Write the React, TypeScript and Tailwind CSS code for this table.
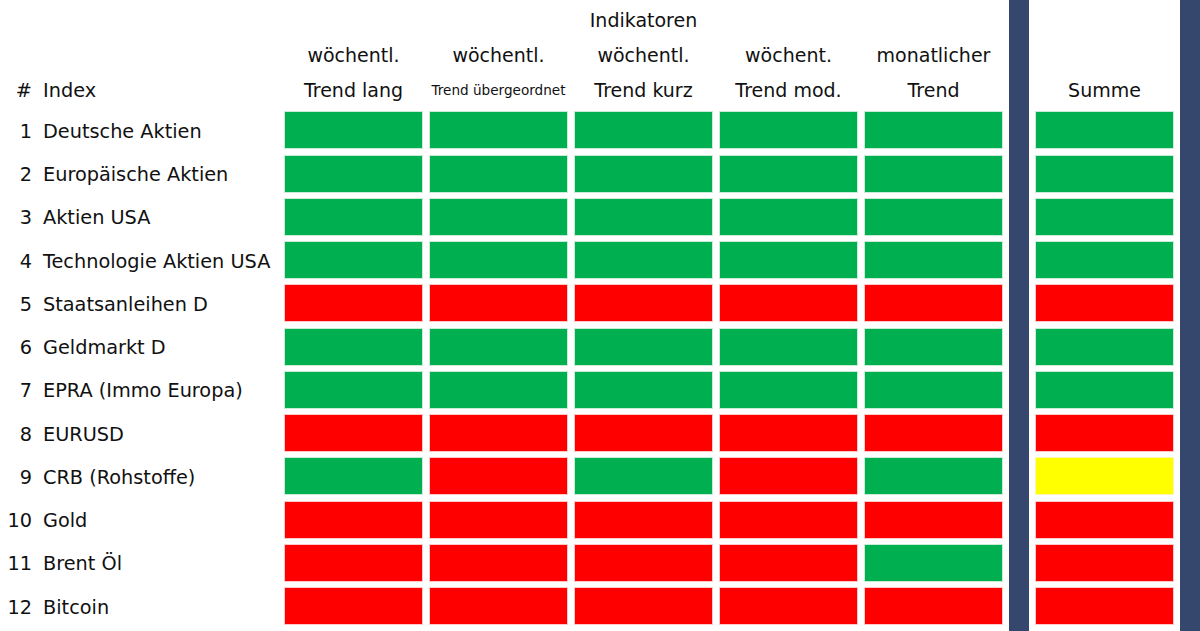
const G = 'g'
const R = 'r'
const Y = 'y'

type Row = { n: number; name: string; cells: string[]; sum: string }

const rows: Row[] = [
  { n: 1, name: 'Deutsche Aktien', cells: [G, G, G, G, G], sum: G },
  { n: 2, name: 'Europäische Aktien', cells: [G, G, G, G, G], sum: G },
  { n: 3, name: 'Aktien USA', cells: [G, G, G, G, G], sum: G },
  { n: 4, name: 'Technologie Aktien USA', cells: [G, G, G, G, G], sum: G },
  { n: 5, name: 'Staatsanleihen D', cells: [R, R, R, R, R], sum: R },
  { n: 6, name: 'Geldmarkt D', cells: [G, G, G, G, G], sum: G },
  { n: 7, name: 'EPRA (Immo Europa)', cells: [G, G, G, G, G], sum: G },
  { n: 8, name: 'EURUSD', cells: [R, R, R, R, R], sum: R },
  { n: 9, name: 'CRB (Rohstoffe)', cells: [G, R, G, R, G], sum: Y },
  { n: 10, name: 'Gold', cells: [R, R, R, R, R], sum: R },
  { n: 11, name: 'Brent Öl', cells: [R, R, R, R, G], sum: R },
  { n: 12, name: 'Bitcoin', cells: [R, R, R, R, R], sum: R },
]

const colorClass: Record<string, string> = {
  g: 'bg-[#00b050] border-[#c8ecd6]',
  r: 'bg-[#ff0000] border-[#ffc9c9]',
  y: 'bg-[#ffff00] border-[#fff3b0]',
}

function Cell({ c }: { c: string }) {
  return <div className={`border ${colorClass[c]}`} />
}

function HeadCell({ lines, small }: { lines: string[]; small?: boolean }) {
  return (
    <div className="-mb-[2px] flex flex-col items-center justify-end text-[19px] leading-[35px] text-[#111]">
      {lines.map((l, i) => (
        <div
          key={i}
          className={small && i === lines.length - 1 ? 'whitespace-nowrap text-[13.6px]' : 'whitespace-nowrap'}
        >
          {l}
        </div>
      ))}
    </div>
  )
}

export default function App() {
  return (
    <div
      className="grid h-[631px] w-[1200px] grid-cols-[278px_139px_139px_139px_139px_139px_20px_139px_20px] grid-rows-[106px_repeat(12,38px)] gap-x-[6px] gap-y-[5.25px] overflow-hidden bg-white"
      style={{ fontFamily: '"DejaVu Sans", Verdana, sans-serif' }}
    >
      {/* header */}
      <div className="-mb-[2px] flex items-end text-[19.3px] leading-[35px] text-[#111]">
        <span className="w-[32px] text-right">#</span>
        <span className="ml-[11px]">Index</span>
      </div>
      <HeadCell lines={['wöchentl.', 'Trend lang']} />
      <HeadCell lines={['wöchentl.', 'Trend übergeordnet']} small />
      <HeadCell lines={['Indikatoren', 'wöchentl.', 'Trend kurz']} />
      <HeadCell lines={['wöchent.', 'Trend mod.']} />
      <HeadCell lines={['monatlicher', 'Trend']} />
      <div className="col-start-7 row-span-full row-start-1 -mb-4 bg-[#36476d]" />
      <HeadCell lines={['Summe']} />
      <div className="col-start-9 row-span-full row-start-1 -mb-4 bg-[#36476d]" />

      {rows.map((r) => (
        <div key={r.n} className="contents">
          <div className="col-start-1 flex items-center pt-[4px] text-[19.3px] text-[#111]">
            <span className="w-[32px] text-right">{r.n}</span>
            <span className="ml-[11px] whitespace-nowrap">{r.name}</span>
          </div>
          {r.cells.map((c, i) => (
            <Cell key={i} c={c} />
          ))}
          <div className={`col-start-8 border ${colorClass[r.sum]}`} />
        </div>
      ))}
    </div>
  )
}
